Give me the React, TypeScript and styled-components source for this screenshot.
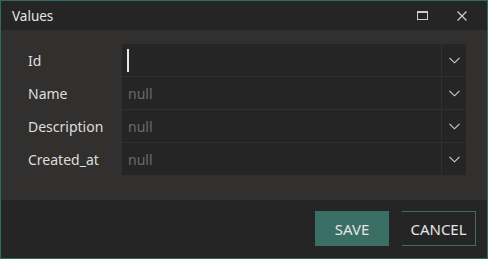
import React from "react";
import styled, { createGlobalStyle } from "styled-components";

const GlobalStyle = createGlobalStyle`
  html, body {
    margin: 0;
    padding: 0;
    background: #252525;
  }
  * {
    box-sizing: border-box;
  }
`;

const Window = styled.div`
  width: 488px;
  height: 259px;
  display: flex;
  flex-direction: column;
  border: 1px solid #2f6b5e;
  background: #252525;
  font-family: "Noto Sans", "Open Sans", sans-serif;
  color: #dcdcdc;
`;

const TitleBar = styled.div`
  height: 29px;
  display: flex;
  align-items: center;
  padding: 0 5px 0 11px;
  background: #252525;
`;

const Title = styled.div`
  flex: 1;
  font-size: 13.5px;
  color: #e4e4e4;
`;

const TitleButton = styled.div`
  width: 40px;
  height: 29px;
  display: flex;
  align-items: center;
  justify-content: center;
  color: #cfcfcf;
`;

const Body = styled.div`
  height: 170px;
  background: #32302f;
  padding: 14px 21px 0 27px;
`;

const Grid = styled.div`
  display: grid;
  grid-template-columns: 93px 1fr 24px;
  grid-auto-rows: 32px;
  column-gap: 1px;
  row-gap: 1px;
`;

const Label = styled.div`
  display: flex;
  align-items: center;
  font-size: 14px;
  color: #dedede;
`;

const Field = styled.div`
  display: flex;
  align-items: center;
  padding-left: 6px;
  background: #252525;
  font-size: 14px;
  color: #6b6b6b;
`;

const Caret = styled.span`
  width: 2px;
  height: 23px;
  margin-left: -1px;
  background: #e8e8e8;
`;

const DropButton = styled.div`
  display: flex;
  align-items: center;
  justify-content: center;
  background: #252525;
  color: #cfcfcf;
`;

const Footer = styled.div`
  flex: 1;
  display: flex;
  justify-content: flex-end;
  align-items: flex-start;
  padding: 11px 11px 0 0;
  gap: 13px;
  background: #252525;
`;

const Button = styled.button<{ $primary?: boolean }>`
  width: 74px;
  height: 35px;
  font-family: inherit;
  font-size: 15px;
  color: #e6e6e6;
  background: ${(p) => (p.$primary ? "#3b6e65" : "transparent")};
  border: ${(p) => (p.$primary ? "none" : "1px solid #3b6e65")};
  border-left: none;
  padding: 0;
  cursor: pointer;
`;

const Chevron = () => (
  <svg width="11" height="7" viewBox="0 0 11 7" fill="none">
    <path d="M0.5 0.8 L5.5 5.8 L10.5 0.8" stroke="currentColor" strokeWidth="1.1" />
  </svg>
);

const fields = ["Id", "Name", "Description", "Created_at"];

const App = () => {
  return (
    <Window>
      <GlobalStyle />
      <TitleBar>
        <Title>Values</Title>
        <TitleButton>
          <svg width="11" height="9" viewBox="0 0 11 9" fill="none">
            <rect x="0.5" y="1" width="10" height="7.5" stroke="currentColor" strokeWidth="1" />
            <line x1="0" y1="1" x2="11" y2="1" stroke="currentColor" strokeWidth="2" />
          </svg>
        </TitleButton>
        <TitleButton>
          <svg width="10" height="10" viewBox="0 0 10 10" fill="none">
            <path d="M0.5 0.5 L9.5 9.5 M9.5 0.5 L0.5 9.5" stroke="currentColor" strokeWidth="1.2" />
          </svg>
        </TitleButton>
      </TitleBar>
      <Body>
        <Grid>
          {fields.map((name, i) => (
            <React.Fragment key={name}>
              <Label>{name}</Label>
              <Field>{i === 0 ? <Caret /> : "null"}</Field>
              <DropButton>
                <Chevron />
              </DropButton>
            </React.Fragment>
          ))}
        </Grid>
      </Body>
      <Footer>
        <Button $primary>SAVE</Button>
        <Button>CANCEL</Button>
      </Footer>
    </Window>
  );
};

export default App;
